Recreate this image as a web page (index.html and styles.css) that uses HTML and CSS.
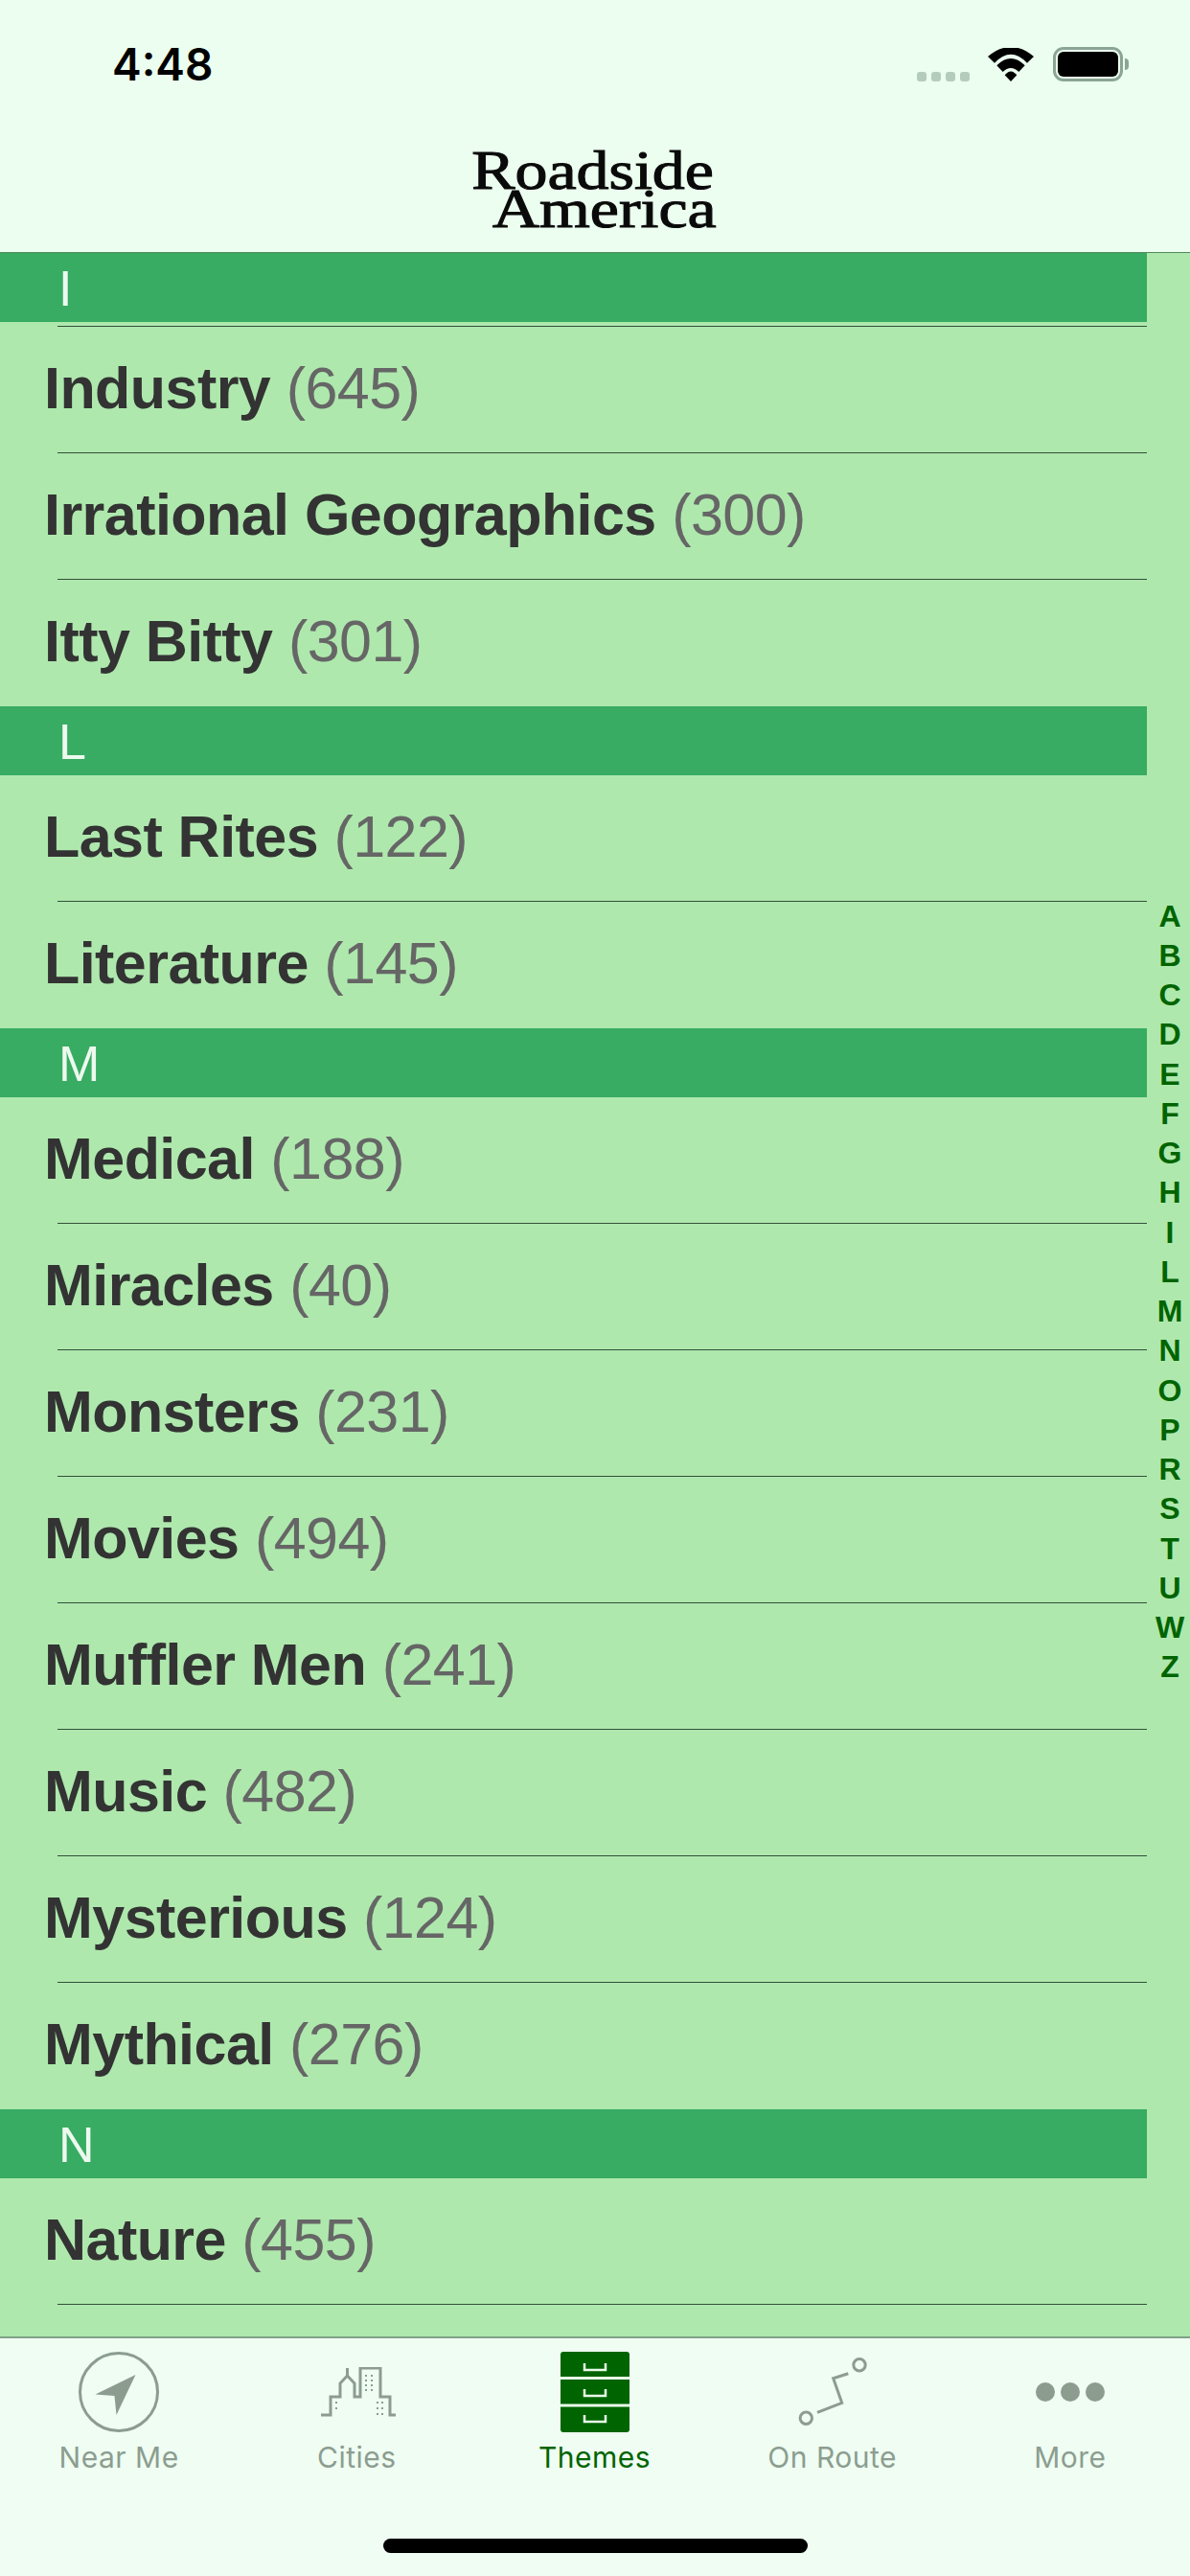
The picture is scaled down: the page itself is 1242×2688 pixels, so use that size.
FILE: index.html
```html
<!DOCTYPE html>
<html lang="en">
<head>
    <meta charset="UTF-8">
    <meta name="viewport" content="width=device-width, initial-scale=1.0">
    <title>Roadside America - Themes</title>
    <link rel="stylesheet" href="styles.css">
</head>
<body>
    <header class="top">
        <div class="status-bar">
            <span class="time">4:48</span>
            <div class="status-icons">
                <div class="signal"><i></i><i></i><i></i><i></i></div>
                <svg class="wifi" width="48" height="35" viewBox="0 0 48 35">
                    <path d="M0 9Q24 -11 48 9L41 15.7Q24 -2.3 7 15.7Z"/>
                    <path d="M9.3 18.3Q24 3.7 38.7 18.3L32.3 25Q24 17 15.7 25Z"/>
                    <path d="M17.7 28.3Q24 20.7 30.3 28.3L24 35Z"/>
                </svg>
                <div class="battery"><div class="battery-fill"></div></div>
                <div class="battery-nub"></div>
            </div>
        </div>
        <div class="logo">
            <span class="logo-top">Roadside</span>
            <span>America</span>
        </div>
    </header>

    <main class="list">
        <div class="section">I</div>
        <div class="row-stub"></div>
        <div class="row"><span class="name">Industry</span> <span class="count">(645)</span></div>
        <div class="row"><span class="name">Irrational Geographics</span> <span class="count">(300)</span></div>
        <div class="row last"><span class="name">Itty Bitty</span> <span class="count">(301)</span></div>

        <div class="section">L</div>
        <div class="row"><span class="name">Last Rites</span> <span class="count">(122)</span></div>
        <div class="row last"><span class="name">Literature</span> <span class="count">(145)</span></div>

        <div class="section">M</div>
        <div class="row"><span class="name">Medical</span> <span class="count">(188)</span></div>
        <div class="row"><span class="name">Miracles</span> <span class="count">(40)</span></div>
        <div class="row"><span class="name">Monsters</span> <span class="count">(231)</span></div>
        <div class="row"><span class="name">Movies</span> <span class="count">(494)</span></div>
        <div class="row"><span class="name">Muffler Men</span> <span class="count">(241)</span></div>
        <div class="row"><span class="name">Music</span> <span class="count">(482)</span></div>
        <div class="row"><span class="name">Mysterious</span> <span class="count">(124)</span></div>
        <div class="row last"><span class="name">Mythical</span> <span class="count">(276)</span></div>

        <div class="section">N</div>
        <div class="row"><span class="name">Nature</span> <span class="count">(455)</span></div>

        <!-- alphabet index sits over the list -->
        <div class="index">
            <span>A</span><span>B</span><span>C</span><span>D</span><span>E</span>
            <span>F</span><span>G</span><span>H</span><span>I</span><span>L</span>
            <span>M</span><span>N</span><span>O</span><span>P</span><span>R</span>
            <span>S</span><span>T</span><span>U</span><span>W</span><span>Z</span>
        </div>
    </main>

    <footer class="bottom">
        <nav class="tabs">
            <div class="tab">
                <div class="tab-icon">
                    <svg width="84" height="84" viewBox="0 0 84 84">
                        <circle class="line" cx="42" cy="42" r="40.5"/>
                        <path class="solid" d="M59.5 24L17.5 44.5L37.5 46L39.5 66Z"/>
                    </svg>
                </div>
                <span>Near Me</span>
            </div>
            <div class="tab">
                <div class="tab-icon cities-icon">
                    <svg width="78" height="52" viewBox="0 0 78 52">
                        <path class="line" d="M0 50H10V31H20V17L27.5 9V1M27.5 9L35 17V31H41V1H62V31H72V50H78"/>
                        <path class="dots" d="M46 9h2M52 9h2M46 14h2M52 14h2M46 19h2M52 19h2M46 24h2M52 24h2M15 37h2M15 43h2M58 37h2M63 37h2M58 43h2M63 43h2M58 49h2M63 49h2"/>
                    </svg>
                </div>
                <span>Cities</span>
            </div>
            <div class="tab active">
                <div class="tab-icon">
                    <svg width="72" height="84" viewBox="0 0 72 84">
                        <rect class="cabinet" width="72" height="84" rx="3"/>
                        <path class="drawer-gap" d="M0 27.5H72M0 56H72"/>
                        <path class="drawer-handle" d="M25 12V19H47V12M25 39V46H47V39M25 66V73H47V66"/>
                    </svg>
                </div>
                <span>Themes</span>
            </div>
            <div class="tab">
                <div class="tab-icon">
                    <svg width="72" height="72" viewBox="0 0 72 72">
                        <circle class="line" cx="64" cy="7.7" r="6.2"/>
                        <circle class="line" cx="8.3" cy="63.3" r="6.2"/>
                        <path class="line" d="M52.3 16.7L36.7 21.7L45.7 47.3L20 57.3"/>
                    </svg>
                </div>
                <span>On Route</span>
            </div>
            <div class="tab">
                <div class="tab-icon">
                    <svg width="72" height="20" viewBox="0 0 72 20">
                        <circle class="solid" cx="10" cy="10" r="10"/>
                        <circle class="solid" cx="36" cy="10" r="10"/>
                        <circle class="solid" cx="62" cy="10" r="10"/>
                    </svg>
                </div>
                <span>More</span>
            </div>
        </nav>
        <div class="home-indicator"></div>
    </footer>
</body>
</html>
```

FILE: styles.css
```css
body {
    margin: 0;
    width: 1242px;
    height: 2688px;
    display: flex;
    flex-direction: column;
    overflow: hidden;
    font-family: "Liberation Sans", Arial, sans-serif;
    background-color: #aee8ad;
}

/* status bar + logo */
.top {
    height: 264px;
    flex-shrink: 0;
    box-sizing: border-box;
    border-bottom: 1px solid #4f8a5f;
    background-color: #ebfeef;
}
.status-bar {
    height: 134px;
    box-sizing: border-box;
    padding: 49px 64px 0 117px;
    display: flex;
    justify-content: space-between;
    align-items: flex-start;
}
.time {
    font-family: Inter, sans-serif;
    font-weight: 600;
    font-size: 46px;
    line-height: 37px;
    color: #000;
}
.status-icons {
    display: flex;
    align-items: flex-start;
}
.signal {
    display: flex;
    gap: 5px;
    margin: 26px 19px 0 0;
}
.signal i {
    width: 10px;
    height: 10px;
    border-radius: 3px;
    background-color: #b5ccbd;
}
.wifi {
    fill: #000;
    margin: 1px 20px 0 0;
}
.battery {
    width: 73px;
    height: 36px;
    box-sizing: border-box;
    padding: 2px;
    border: 3px solid #8aa596;
    border-radius: 11px;
}
.battery-fill {
    height: 100%;
    border-radius: 6px;
    background-color: #000;
}
.battery-nub {
    width: 4px;
    height: 12px;
    margin: 12px 0 0 2px;
    border-radius: 0 6px 6px 0;
    background-color: #8aa596;
}
.logo {
    width: 255px;
    margin: 24px 0 0 493px;
    display: flex;
    flex-direction: column;
    align-items: flex-end;
    font-family: "Liberation Serif", "Times New Roman", serif;
    font-size: 58px;
    line-height: 40px;
    color: #0a0a0a;
    -webkit-text-stroke: 1.1px #0a0a0a;
}
.logo span {
    transform: scaleX(1.17);
    transform-origin: right center;
}
.logo .logo-top {
    margin-right: 3px;
}

/* list */
.list {
    position: relative;
    flex: 1;
    min-height: 0;
    overflow: hidden;
    padding-right: 45px;
}
.section {
    height: 72px;
    box-sizing: border-box;
    padding-left: 61px;
    font-size: 52px;
    line-height: 75px;
    color: #edf9ee;
    background-color: #37ac62;
}
.row-stub {
    height: 5px;
    box-sizing: border-box;
    margin-left: 60px;
    border-bottom: 1px solid #33503c;
}
.row {
    position: relative;
    height: 132px;
    box-sizing: border-box;
    padding-left: 46px;
    font-size: 61px;
    letter-spacing: -0.55px;
    line-height: 128px;
    white-space: nowrap;
}
/* separator is inset from the text's left edge */
.row::after {
    content: "";
    position: absolute;
    left: 60px;
    right: 0;
    bottom: 0;
    height: 1px;
    background-color: #33503c;
}
.row.last::after {
    display: none;
}
.name {
    font-weight: bold;
    color: #333;
}
.count {
    color: #666;
}
.index {
    position: absolute;
    top: 0;
    bottom: 6px;
    right: 0;
    width: 42px;
    display: flex;
    flex-direction: column;
    justify-content: center;
    align-items: center;
    font-size: 32px;
    font-weight: bold;
    line-height: 41.25px;
    color: #006400;
}

/* tab bar */
.bottom {
    height: 250px;
    flex-shrink: 0;
    box-sizing: border-box;
    border-top: 2px solid #7fa286;
    background-color: #effdf2;
}
.tabs {
    display: flex;
    padding: 14px 1px 0 0;
}
.tab {
    flex: 1;
    display: flex;
    flex-direction: column;
    align-items: center;
    font-family: Inter, sans-serif;
    font-size: 30px;
    letter-spacing: 0.5px;
    line-height: 40px;
    color: #8c9d90;
}
.tab.active {
    color: #006400;
}
.tab-icon {
    height: 84px;
    margin-bottom: 6px;
    display: flex;
    align-items: center;
    justify-content: center;
}
.cities-icon {
    margin-left: 3px;
}
.line {
    fill: none;
    stroke: #8c9d90;
    stroke-width: 3;
}
.solid {
    fill: #8c9d90;
}
.dots {
    fill: none;
    stroke: #8c9d90;
    stroke-width: 2;
}
.cabinet {
    fill: #006400;
}
.drawer-gap {
    fill: none;
    stroke: #eafbe9;
    stroke-width: 3;
}
.drawer-handle {
    fill: none;
    stroke: #eafbe9;
    stroke-width: 2.5;
}
.home-indicator {
    width: 443px;
    height: 15px;
    margin: 65px auto 0;
    border-radius: 8px;
    background-color: #000;
}
```
